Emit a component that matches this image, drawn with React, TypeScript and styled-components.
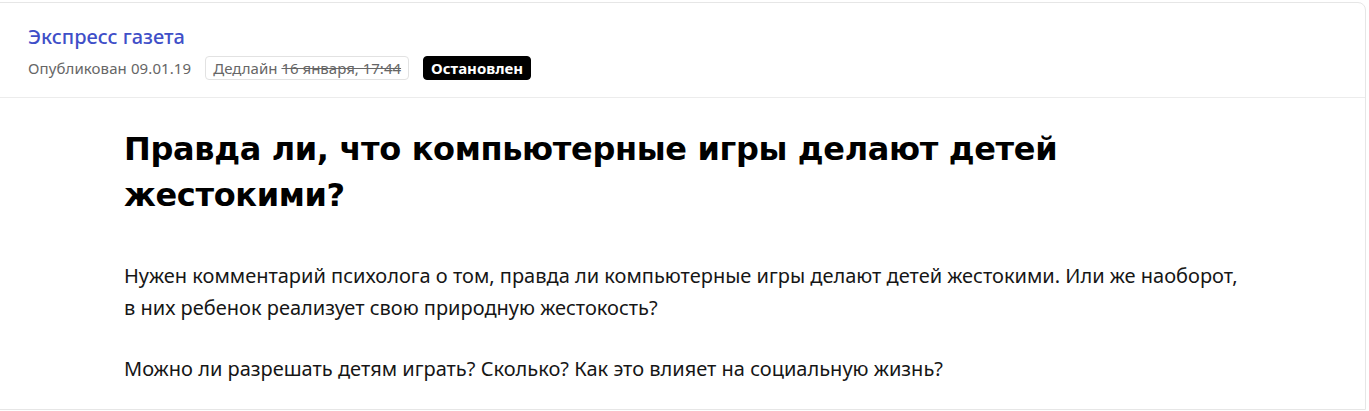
import React from "react";
import styled, { createGlobalStyle } from "styled-components";

const Global = createGlobalStyle`
  html, body { margin: 0; padding: 0; background: #ffffff; }
  body { font-family: "Noto Sans", "Open Sans", sans-serif; color: #111; }
`;

const Card = styled.article`
  margin: 2px 3px 0 -1px;
  border: 1px solid #e6e6e6;
  border-radius: 0 8px 0 0;
  background: #fff;
`;

const Header = styled.header`
  padding: 20px 28px 17px;
  border-bottom: 1px solid #ececec;
  display: flex;
  flex-direction: column;
  gap: 5px;
`;

const Source = styled.a`
  font-size: 20px;
  line-height: 28px;
  font-weight: 500;
  color: #3f4fc8;
  text-decoration: none;
`;

const Meta = styled.div`
  display: flex;
  align-items: center;
  gap: 14px;
  font-size: 15px;
  color: #666;
`;

const Published = styled.span`
  letter-spacing: 0.1px;
`;

const Tag = styled.span<{ $dark?: boolean }>`
  display: inline-flex;
  align-items: center;
  height: 24px;
  padding: 0 7px;
  border-radius: 4px;
  box-sizing: border-box;
  border: 1px solid ${(p) => (p.$dark ? "#000" : "#e2e2e2")};
  background: ${(p) => (p.$dark ? "#000" : "#fff")};
  color: ${(p) => (p.$dark ? "#fff" : "#666")};
  font-weight: ${(p) => (p.$dark ? 700 : 400)};
`;

const Struck = styled.s`
  margin-left: 4px;
`;

const Body = styled.section`
  padding: 28px 124px 24px;
`;

const Text = styled.div`
  max-width: 1125px;
`;

const Title = styled.h1`
  margin: 0 0 42px;
  font-family: "DejaVu Sans", sans-serif;
  font-weight: 700;
  font-size: 32px;
  line-height: 46px;
  color: #000;
  letter-spacing: -0.35px;
`;

const Para = styled.p`
  margin: 0 0 29px;
  font-size: 20px;
  line-height: 32px;
  color: #161616;
  &:last-child { margin-bottom: 0; }
`;

export default function App() {
  return (
    <>
      <Global />
      <Card>
        <Header>
          <Source href="#">Экспресс газета</Source>
          <Meta>
            <Published>Опубликован 09.01.19</Published>
            <Tag>
              Дедлайн<Struck>16 января, 17:44</Struck>
            </Tag>
            <Tag $dark>Остановлен</Tag>
          </Meta>
        </Header>
        <Body>
          <Text>
            <Title>Правда ли, что компьютерные игры делают детей жестокими?</Title>
            <Para>
              Нужен комментарий психолога о том, правда ли компьютерные игры делают детей жестокими. Или же наоборот,
              в них ребенок реализует свою природную жестокость?
            </Para>
            <Para>Можно ли разрешать детям играть? Сколько? Как это влияет на социальную жизнь?</Para>
          </Text>
        </Body>
      </Card>
    </>
  );
}
